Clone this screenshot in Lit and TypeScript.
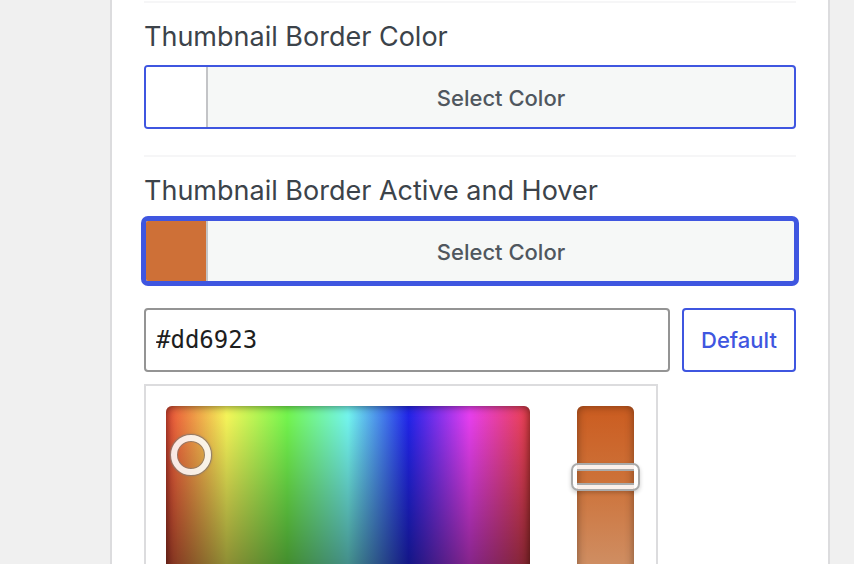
import { LitElement, html, css } from "lit";
import { customElement, property, state } from "lit/decorators.js";

@customElement("color-button")
class ColorButton extends LitElement {
  @property() label = "";
  @property() color = "#fff";
  @property({ type: Boolean }) open = false;

  static styles = css`
    :host {
      display: block;
    }
    .title {
      display: block;
      font-size: 27px;
      line-height: 36px;
      color: #3c434a;
    }
    .button {
      display: flex;
      width: 100%;
      height: 64px;
      margin-top: 10px;
      padding: 0;
      overflow: hidden;
      border: 2px solid #3f56e0;
      border-radius: 4px;
      background: #f6f8f7;
      color: #50575e;
      font: 500 22px/32px Inter, "Liberation Sans", sans-serif;
      cursor: pointer;
      outline: none;
    }
    .button.open {
      box-shadow: 0 0 0 3px #3f56e0;
    }
    .swatch {
      flex: none;
      width: 60px;
      align-self: stretch;
      border-right: 2px solid #c3c4c7;
    }
    .text {
      flex: 1;
      align-self: center;
      padding-top: 2px;
      text-align: center;
    }
  `;

  render() {
    return html`
      <label class="title" for="toggle">${this.label}</label>
      <button
        id="toggle"
        class="button ${this.open ? "open" : ""}"
        type="button"
        aria-expanded=${this.open ? "true" : "false"}
      >
        <span class="swatch" style="background:${this.color}"></span>
        <span class="text">Select Color</span>
      </button>
    `;
  }
}

@customElement("color-picker")
class ColorPicker extends LitElement {
  @state() saturation = 83;

  static styles = css`
    :host {
      display: flex;
      justify-content: space-between;
      box-sizing: border-box;
      width: 514px;
      max-width: 100%;
      padding: 20px 22px 20px 20px;
      border: 2px solid #dcdcde;
      background: #fff;
    }
    .square {
      position: relative;
      width: 364px;
      height: 364px;
      border-radius: 6px;
      background:
        linear-gradient(to bottom, transparent, #000),
        linear-gradient(
          to right,
          #f04e38,
          #fbfb5c 16.67%,
          #76fb50 33.33%,
          #76fbf4 50%,
          #2225ee 66.67%,
          #ec40f5 83.33%,
          #ee4248
        );
    }
    .square::after,
    .strip::after {
      content: "";
      position: absolute;
      inset: 0;
      border-radius: inherit;
      box-shadow: inset 0 0 10px rgba(0, 0, 0, 0.6);
      pointer-events: none;
    }
    .strip::after {
      box-shadow: inset 0 0 10px rgba(0, 0, 0, 0.4);
    }
    .marker {
      position: absolute;
      z-index: 1;
      left: 5px;
      top: 29px;
      width: 40px;
      height: 40px;
      padding: 0;
      border: 6px solid #fff;
      border-radius: 50%;
      background: none;
      opacity: 0.87;
      box-shadow:
        0 0 0 1px #8a7a70,
        0 0 2px 1px #8a7a70,
        inset 0 0 0 1px #8a7a70;
    }
    .strip {
      position: relative;
      width: 57px;
      height: 364px;
      border-radius: 6px;
      background: linear-gradient(#cb5c20, #cd7138 20%, #cf8d61 43%, #d6d6d6);
    }
    .range {
      -webkit-appearance: none;
      appearance: none;
      position: absolute;
      z-index: 1;
      left: -6px;
      top: 0;
      width: 69px;
      height: 100%;
      margin: 0;
      background: none;
      writing-mode: vertical-lr;
      direction: rtl;
      outline: none;
    }
    .range::-webkit-slider-thumb {
      -webkit-appearance: none;
      box-sizing: border-box;
      width: 69px;
      height: 28px;
      border: 2px solid #aaa;
      border-radius: 7px;
      box-shadow: 0 2px 4px rgba(0, 0, 0, 0.2);
      background:
        linear-gradient(#fff, #fff) left / 4px 100% no-repeat,
        linear-gradient(#fff, #fff) right / 4px 100% no-repeat,
        linear-gradient(
          #faf0eb 4px,
          #aaa 4px 6px,
          transparent 6px 18px,
          #aaa 18px 20px,
          #faf0eb 20px
        );
      background-origin: padding-box;
      background-clip: padding-box;
    }
  `;

  render() {
    return html`
      <div class="square">
        <button class="marker" type="button" aria-label="Hue and brightness"></button>
      </div>
      <div class="strip">
        <input
          class="range"
          type="range"
          min="0"
          max="100"
          aria-label="Saturation"
          .value=${String(this.saturation)}
        />
      </div>
    `;
  }
}

@customElement("app-root")
class AppRoot extends LitElement {
  @state() hover = "#dd6923";

  static styles = css`
    :host {
      display: block;
      box-sizing: border-box;
      height: 100vh;
      overflow: hidden;
      padding: 0 24px 0 110px;
      background: #f0f0f0;
      font-family: Inter, "Liberation Sans", sans-serif;
    }
    .panel {
      box-sizing: border-box;
      min-height: 100%;
      padding: 1px 32px 0;
      border: solid #dcdcde;
      border-width: 0 2px;
      background: #fff;
    }
    .field {
      padding: 16px 0 26px;
      border-top: 2px solid #f6f6f7;
    }
    .row {
      display: flex;
      gap: 12px;
      margin: 25px 0 12px;
    }
    .hex,
    .default {
      box-sizing: border-box;
      height: 64px;
      border: 2px solid #8c8f94;
      border-radius: 4px;
      background: #fff;
    }
    .hex {
      flex: 1;
      min-width: 0;
      padding: 0 10px;
      border-color: #949494;
      color: #1e1e1e;
      font: 24px "DejaVu Sans Mono", monospace;
      outline: none;
    }
    .default {
      flex: none;
      width: 114px;
      padding: 0;
      border-color: #3f56e0;
      color: #3f56e0;
      font: 500 22px/32px Inter, "Liberation Sans", sans-serif;
      cursor: pointer;
    }
  `;

  render() {
    return html`
      <main class="panel">
        <section class="field">
          <color-button label="Thumbnail Border Color" color="#ffffff"></color-button>
        </section>
        <section class="field">
          <color-button
            label="Thumbnail Border Active and Hover"
            color="#ce7037"
            open
          ></color-button>
          <div class="row">
            <input class="hex" type="text" aria-label="Hex color" .value=${this.hover} />
            <button class="default" type="button">Default</button>
          </div>
          <color-picker></color-picker>
        </section>
      </main>
    `;
  }
}
